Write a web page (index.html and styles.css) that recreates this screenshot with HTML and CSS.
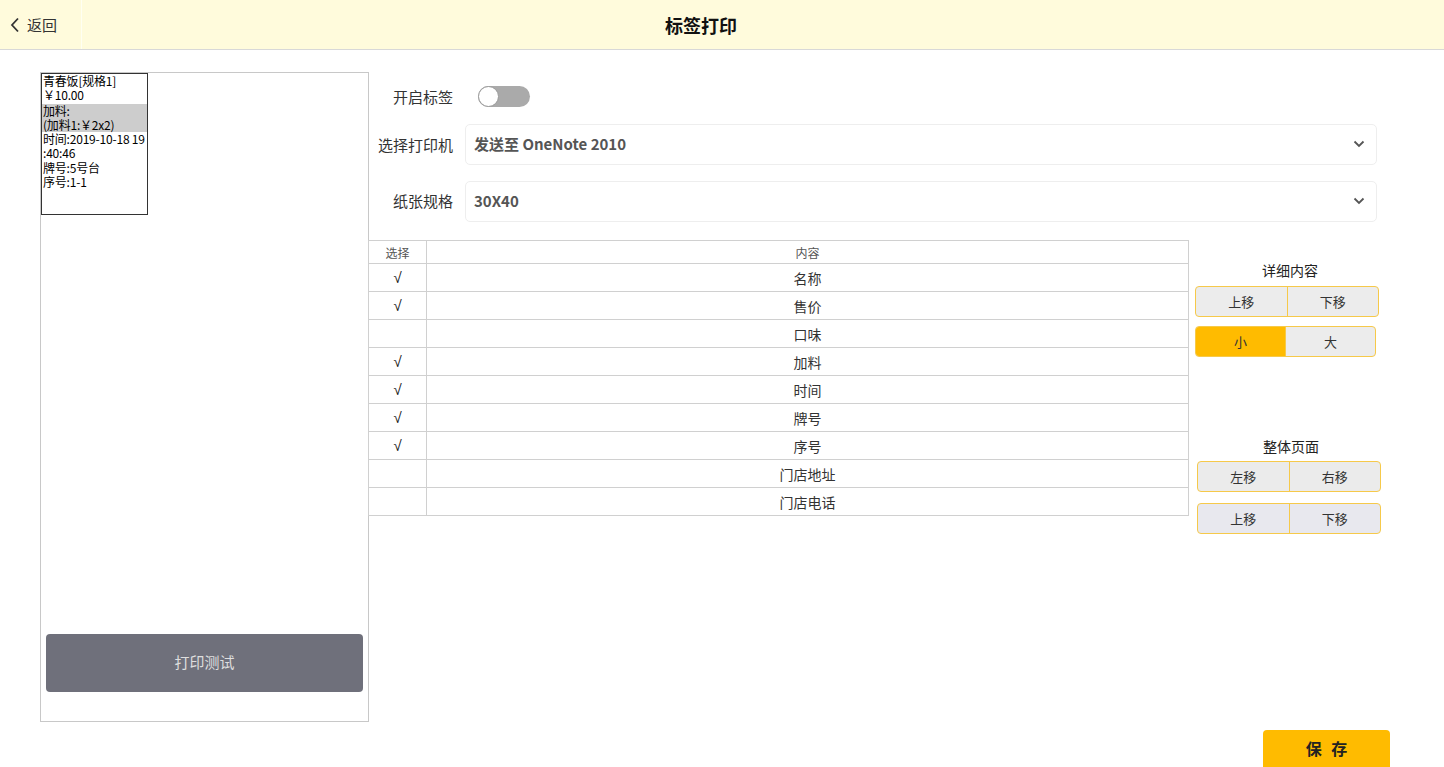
FILE: index.html
```html
<!DOCTYPE html>
<html lang="zh-CN">
<head>
<meta charset="utf-8">
<title>标签打印</title>
<link rel="stylesheet" href="styles.css">
</head>
<body>
<div class="page">
  <header class="header">
    <div class="back">
      <svg class="back-icon" width="12" height="16" viewBox="0 0 12 16"><polyline points="9,1.5 3,8 9,14.5" fill="none" stroke="#333" stroke-width="1.8"/></svg>
      <span>返回</span>
    </div>
    <div class="title">标签打印</div>
  </header>

  <main class="main">
    <section class="left-panel">
      <div class="preview">
        <div class="pl">青春饭[规格1]</div>
        <div class="pl">￥10.00</div>
        <div class="hl">
          <div class="pl">加料:</div>
          <div class="pl">(加料1:￥2x2)</div>
        </div>
        <div class="pl">时间:2019-10-18 19</div>
        <div class="pl">:40:46</div>
        <div class="pl">牌号:5号台</div>
        <div class="pl">序号:1-1</div>
      </div>
      <div class="print-btn">打印测试</div>
    </section>

    <section class="right">
      <div class="form-row toggle-row">
        <div class="label">开启标签</div>
        <div class="toggle"><div class="knob"></div></div>
      </div>
      <div class="form-row sel-row1">
        <div class="label">选择打印机</div>
        <div class="select"><span>发送至 OneNote 2010</span>
          <svg width="12" height="8" viewBox="0 0 12 8"><polyline points="1.5,1.5 6,6 10.5,1.5" fill="none" stroke="#555" stroke-width="1.8"/></svg>
        </div>
      </div>
      <div class="form-row sel-row2">
        <div class="label">纸张规格</div>
        <div class="select"><span>30X40</span>
          <svg width="12" height="8" viewBox="0 0 12 8"><polyline points="1.5,1.5 6,6 10.5,1.5" fill="none" stroke="#555" stroke-width="1.8"/></svg>
        </div>
      </div>

      <div class="lower">
        <table class="tbl">
          <tr class="th"><td class="c1">选择</td><td>内容</td></tr>
          <tr><td class="c1 ck">√</td><td>名称</td></tr>
          <tr><td class="c1 ck">√</td><td>售价</td></tr>
          <tr><td class="c1"></td><td>口味</td></tr>
          <tr><td class="c1 ck">√</td><td>加料</td></tr>
          <tr><td class="c1 ck">√</td><td>时间</td></tr>
          <tr><td class="c1 ck">√</td><td>牌号</td></tr>
          <tr><td class="c1 ck">√</td><td>序号</td></tr>
          <tr><td class="c1"></td><td>门店地址</td></tr>
          <tr><td class="c1"></td><td>门店电话</td></tr>
        </table>

        <div class="side">
          <div class="side-title t1">详细内容</div>
          <div class="bgroup g1"><div class="bt">上移</div><div class="bt">下移</div></div>
          <div class="bgroup g2"><div class="bt active">小</div><div class="bt">大</div></div>
          <div class="side-title t2">整体页面</div>
          <div class="bgroup g3"><div class="bt">左移</div><div class="bt">右移</div></div>
          <div class="bgroup g4"><div class="bt">上移</div><div class="bt">下移</div></div>
        </div>
      </div>
    </section>
  </main>

  <footer class="footer">
    <div class="save">保 存</div>
  </footer>
</div>
</body>
</html>
```

FILE: styles.css
```css
* { box-sizing: border-box; }
html, body { margin: 0; padding: 0; background: #fff; }
body {
  width: 1444px;
  height: 767px;
  overflow: hidden;
  font-family: "Noto Sans CJK SC", "Noto Sans", sans-serif;
  color: #333;
}
.page { display: flex; flex-direction: column; height: 767px; }
.page > * { flex-shrink: 0; }

.header {
  height: 50px;
  background: #fffbdc;
  border-bottom: 1px solid #d8d8d8;
  display: flex;
  align-items: stretch;
}
.back {
  width: 82px;
  border-right: 1px solid #fffff2;
  display: flex;
  align-items: center;
  padding-left: 9px;
  gap: 6px;
  font-size: 15px;
  color: #333;
}
.back-icon { margin-top: 1px; }
.title {
  flex: 1;
  display: flex;
  align-items: center;
  justify-content: center;
  padding-right: 124px;
  font-size: 18px;
  font-weight: 700;
  color: #111;
}

.main { display: flex; align-items: flex-start; padding-top: 22px; padding-left: 40px; }

.left-panel {
  width: 329px;
  height: 650px;
  flex-shrink: 0;
  border: 1px solid #c8c8c8;
  display: flex;
  flex-direction: column;
}
.preview {
  width: 107px;
  height: 142px;
  border: 1px solid #333;
  font-size: 12px;
  line-height: 14.3px;
  color: #000;
  padding-left: 1px;
}
.pl { white-space: nowrap; letter-spacing: -0.2px; }
.hl { background: #cdcdcd; margin-left: -1px; padding-left: 1px; margin-top: 1px; }
.print-btn {
  margin: auto 5px 29px 5px;
  height: 58px;
  background: #6f707b;
  border-radius: 4px;
  color: #dedede;
  font-size: 15px;
  display: flex;
  align-items: center;
  justify-content: center;
  padding-bottom: 4px;
}

.right { display: flex; flex-direction: column; width: 1040px; flex-shrink: 0; margin-left: -1px; }
.form-row { display: flex; align-items: center; }
.label {
  width: 85px;
  text-align: right;
  font-size: 15px;
  color: #333;
  margin-right: 12px;
}
.toggle-row { height: 41px; margin-top: 4px; }
.toggle {
  width: 52px;
  height: 21px;
  border-radius: 11px;
  background: #aaa;
  margin-left: 13px;
  position: relative;
}
.knob {
  position: absolute;
  left: 0;
  top: 0;
  width: 21px;
  height: 21px;
  border-radius: 50%;
  background: #fff;
  border: 1px solid #9a9a9a;
}
.sel-row1 { margin-top: 7px; }
.sel-row2 { margin-top: 16px; }
.sel-row2 .label { padding-bottom: 2px; }
.select {
  width: 912px;
  height: 41px;
  border: 1px solid #eeeeee;
  border-radius: 5px;
  display: flex;
  align-items: center;
  justify-content: space-between;
  padding: 0 11px 3px 8px;
  font-size: 15px;
  font-weight: 700;
  color: #555;
}
.select svg { margin-top: 2px; }

.lower { display: flex; align-items: flex-start; margin-top: 18px; }
.tbl {
  width: 821px;
  flex-shrink: 0;
  border-collapse: collapse;
  border: 1px solid #c8c8c8;
  font-size: 14px;
  color: #333;
}
.tbl td {
  border: 1px solid #d0d0d0;
  text-align: center;
  padding: 0;
  height: 28px;
}
.tbl .th td { height: 23px; font-size: 12px; color: #555; }
.tbl td.c1 { width: 58px; }
.tbl td.ck { font-family: "Liberation Sans", sans-serif; font-size: 15px; color: #222; }

.side { display: flex; flex-direction: column; width: 190px; margin-left: 6px; flex-shrink: 0; }
.side-title { font-size: 14px; color: #222; text-align: center; line-height: 20px; }
.t1 { margin-top: 20px; }
.t2 { margin-top: 79px; margin-left: 2px; }
.bgroup {
  display: flex;
  width: 184px;
  border: 1px solid #f6c94a;
  border-radius: 4px;
  overflow: hidden;
  background: #ececec;
}
.g1 { margin-top: 6px; height: 31px; }
.g2 { margin-top: 9px; height: 31px; width: 181px; }
.g3 { margin-top: 5px; height: 31px; margin-left: 2px; background: #ebebeb; }
.g4 { margin-top: 11px; height: 31px; margin-left: 2px; background: #e8e8ee; }
.bt {
  flex: 1;
  display: flex;
  align-items: center;
  justify-content: center;
  font-size: 13px;
  color: #333;
}
.bt + .bt { border-left: 1px solid #f6c94a; }
.bt.active { background: #ffbb00; }

.footer { display: flex; justify-content: flex-end; padding-right: 54px; margin-top: 8px; }
.save {
  width: 127px;
  height: 42px;
  background: #ffbb00;
  border-radius: 4px 4px 0 0;
  display: flex;
  align-items: center;
  justify-content: center;
  padding-bottom: 6px;
  font-size: 16px;
  font-weight: 700;
  letter-spacing: 3px;
  text-indent: 3px;
  color: #222;
}
```
